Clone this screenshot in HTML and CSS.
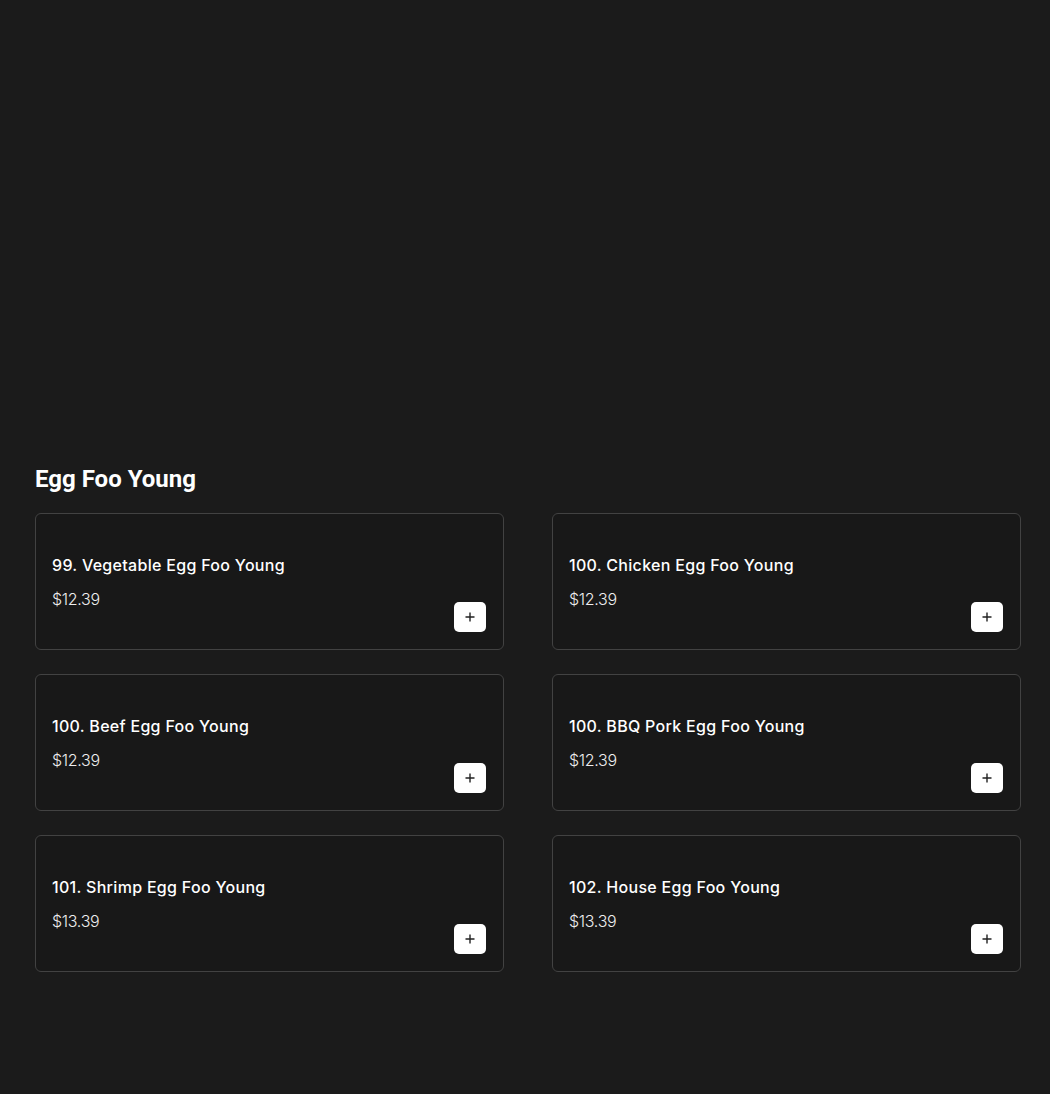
FILE: index.html
```html
<!DOCTYPE html>
<html>
<head>
<meta charset="utf-8">
<link rel="stylesheet" href="styles.css">
</head>
<body>
<main class="page">
  <section class="category">
    <h2 class="category-title">Egg Foo Young</h2>
    <div class="grid">
      <div class="card">
        <div class="info"><div class="name">99. Vegetable Egg Foo Young</div><div class="price">$12.39</div></div>
        <button class="add"><svg viewBox="0 0 12 12" width="12" height="12"><path d="M6 1.5v9M1.5 6h9" stroke="#222" stroke-width="1.4" fill="none"/></svg></button>
      </div>
      <div class="card">
        <div class="info"><div class="name">100. Chicken Egg Foo Young</div><div class="price">$12.39</div></div>
        <button class="add"><svg viewBox="0 0 12 12" width="12" height="12"><path d="M6 1.5v9M1.5 6h9" stroke="#222" stroke-width="1.4" fill="none"/></svg></button>
      </div>
      <div class="card">
        <div class="info"><div class="name">100. Beef Egg Foo Young</div><div class="price">$12.39</div></div>
        <button class="add"><svg viewBox="0 0 12 12" width="12" height="12"><path d="M6 1.5v9M1.5 6h9" stroke="#222" stroke-width="1.4" fill="none"/></svg></button>
      </div>
      <div class="card">
        <div class="info"><div class="name">100. BBQ Pork Egg Foo Young</div><div class="price">$12.39</div></div>
        <button class="add"><svg viewBox="0 0 12 12" width="12" height="12"><path d="M6 1.5v9M1.5 6h9" stroke="#222" stroke-width="1.4" fill="none"/></svg></button>
      </div>
      <div class="card">
        <div class="info"><div class="name">101. Shrimp Egg Foo Young</div><div class="price">$13.39</div></div>
        <button class="add"><svg viewBox="0 0 12 12" width="12" height="12"><path d="M6 1.5v9M1.5 6h9" stroke="#222" stroke-width="1.4" fill="none"/></svg></button>
      </div>
      <div class="card">
        <div class="info"><div class="name">102. House Egg Foo Young</div><div class="price">$13.39</div></div>
        <button class="add"><svg viewBox="0 0 12 12" width="12" height="12"><path d="M6 1.5v9M1.5 6h9" stroke="#222" stroke-width="1.4" fill="none"/></svg></button>
      </div>
    </div>
  </section>
</main>
</body>
</html>
```
FILE: styles.css
```css
html, body {
  margin: 0;
  padding: 0;
  background: #1b1b1b;
  height: 100%;
}
body {
  font-family: "Inter", "Noto Sans", sans-serif;
  color: #fff;
}
.page {
  padding: 463px 29px 0 35px;
}
.category-title {
  font-family: Roboto, sans-serif;
  font-weight: 700;
  font-size: 24px;
  line-height: 32px;
  margin: 0 0 18px;
  color: #fff;
}
.grid {
  display: grid;
  grid-template-columns: 1fr 1fr;
  column-gap: 48px;
  row-gap: 24px;
}
.card {
  box-sizing: border-box;
  height: 137px;
  border: 1px solid #424242;
  border-radius: 6px;
  background: #181818;
  padding: 16px 17px 17px 16px;
  display: flex;
  justify-content: space-between;
  align-items: flex-end;
}
.info {
  align-self: flex-start;
  padding-top: 23px;
}
.name {
  font-size: 16px;
  font-weight: 500;
  line-height: 24px;
  letter-spacing: 0.3px;
}
.price {
  margin-top: 10px;
  font-size: 16px;
  font-weight: 300;
  line-height: 24px;
  letter-spacing: -0.3px;
  color: #eee;
}
.add {
  width: 32px;
  height: 30px;
  border: none;
  border-radius: 5px;
  background: #fff;
  padding: 0;
  display: flex;
  align-items: center;
  justify-content: center;
  cursor: pointer;
}
```
